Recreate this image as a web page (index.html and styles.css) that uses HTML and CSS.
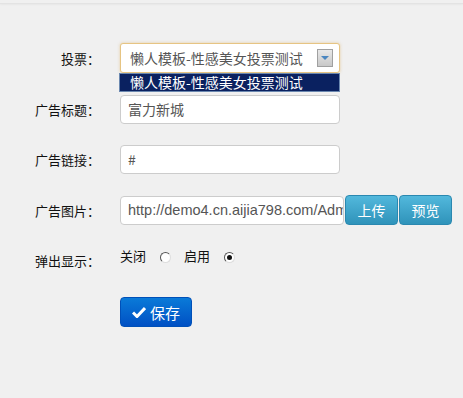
FILE: index.html
```html
<!DOCTYPE html>
<html lang="zh-CN">
<head>
    <meta charset="UTF-8">
    <title>广告设置</title>
    <link rel="stylesheet" href="styles.css">
</head>
<body>
    <div class="topbar"></div>
    <form class="form">
        <div class="row row-vote">
            <label class="label">投票：</label>
            <div class="select">
                <span class="select-text">懒人模板-性感美女投票测试</span>
                <span class="select-arrow"></span>
                <div class="select-list">懒人模板-性感美女投票测试</div>
            </div>
        </div>
        <div class="row">
            <label class="label">广告标题：</label>
            <div class="input">富力新城</div>
        </div>
        <div class="row">
            <label class="label">广告链接：</label>
            <div class="input">#</div>
        </div>
        <div class="row">
            <label class="label">广告图片：</label>
            <div class="input input-url">http://demo4.cn.aijia798.com/Adm</div>
            <button type="button" class="btn-info">上传</button>
            <button type="button" class="btn-info">预览</button>
        </div>
        <div class="row row-radio">
            <label class="label">弹出显示：</label>
            <div class="radios">
                <span class="radio-text">关闭</span>
                <span class="radio"></span>
                <span class="radio-text">启用</span>
                <span class="radio checked"></span>
            </div>
        </div>
        <div class="row row-save">
            <button type="button" class="btn-save">
                <svg width="14" height="12" viewBox="0 0 14 12"><path d="M1 6.5 L5 10.5 L13 2" fill="none" stroke="#fff" stroke-width="3"/></svg>
                保存
            </button>
        </div>
    </form>
</body>
</html>
```

FILE: styles.css
```css
body {
    margin: 0;
    background: #f0f0f0;
    font-family: "Noto Sans CJK SC", "Liberation Sans", sans-serif;
    font-size: 13px;
    color: #222;
}

.topbar {
    height: 3px;
    border-bottom: 1px solid #e3e3e3;
    box-shadow: 0 1px 2px rgba(0, 0, 0, 0.04);
}

.form {
    padding-top: 39px;
}

.row {
    display: flex;
    align-items: center;
    margin-bottom: 21px;
}

.label {
    width: 100px;
    margin-right: 20px;
    text-align: right;
    font-size: 13px;
    color: #111;
}

.row-vote {
    margin-bottom: 22px;
}

.select {
    position: relative;
    box-sizing: border-box;
    width: 220px;
    height: 30px;
    background: #fff;
    border: 1px solid #e6c483;
    border-radius: 3px;
    box-shadow: 0 0 3px rgba(220, 170, 80, 0.5);
    display: flex;
    align-items: center;
}

.select-text {
    padding-left: 9px;
    font-size: 14px;
    color: #555;
    flex: 1;
}

.select-arrow {
    width: 14px;
    height: 16px;
    margin-right: 6px;
    border: 1px solid #a0a0a0;
    background: linear-gradient(#e8e8e8, #c8c8c8);
    position: relative;
}

.select-arrow::after {
    content: "";
    position: absolute;
    left: 3px;
    top: 6px;
    border-left: 4px solid transparent;
    border-right: 4px solid transparent;
    border-top: 4px solid #4a86c0;
}

.select-list {
    position: absolute;
    top: 29px;
    left: -2px;
    box-sizing: border-box;
    width: 221px;
    height: 19px;
    padding-left: 10px;
    background: #0a2160;
    border: 1px solid #6b88b0;
    color: #fff;
    font-size: 14px;
    line-height: 17px;
}

.input {
    box-sizing: border-box;
    width: 220px;
    height: 29px;
    padding: 0 7px;
    background: #fff;
    border: 1px solid #ccc;
    border-radius: 4px;
    font-size: 14px;
    line-height: 27px;
    color: #555;
    white-space: nowrap;
    overflow: hidden;
}

.input-url {
    width: 224px;
    padding-right: 0;
    font-family: "Liberation Sans", sans-serif;
    font-size: 14.5px;
}

.btn-info {
    box-sizing: border-box;
    width: 53px;
    height: 30px;
    margin-left: 1px;
    border: 1px solid #2a88b0;
    border-radius: 4px;
    background: linear-gradient(#52b8dc, #2f93ba);
    color: #fff;
    font-family: "Noto Sans CJK SC", sans-serif;
    font-size: 14px;
    padding: 0;
}

.row-radio {
    align-items: flex-end;
    margin-bottom: 27px;
}

.radios {
    display: flex;
    align-items: center;
    font-size: 13px;
    color: #111;
    padding-bottom: 5px;
}

.radio-text {
    margin-right: 14px;
}

.radio {
    box-sizing: border-box;
    width: 11px;
    height: 11px;
    margin-right: 13px;
    border-radius: 50%;
    border: 1px solid;
    border-color: #555 #ddd #ddd #555;
    background: #fff;
    position: relative;
    margin-top: 4px;
}

.radio.checked::after {
    content: "";
    position: absolute;
    left: 2px;
    top: 2px;
    width: 5px;
    height: 5px;
    border-radius: 50%;
    background: #111;
}

.row-save {
    padding-left: 120px;
}

.btn-save {
    box-sizing: border-box;
    width: 72px;
    height: 30px;
    border: 1px solid #0050b8;
    border-radius: 4px;
    background: linear-gradient(#0a7ad8, #0050c4);
    color: #fff;
    font-family: "Noto Sans CJK SC", sans-serif;
    font-size: 15px;
    display: flex;
    align-items: center;
    justify-content: center;
    gap: 4px;
    padding: 0;
}
```
